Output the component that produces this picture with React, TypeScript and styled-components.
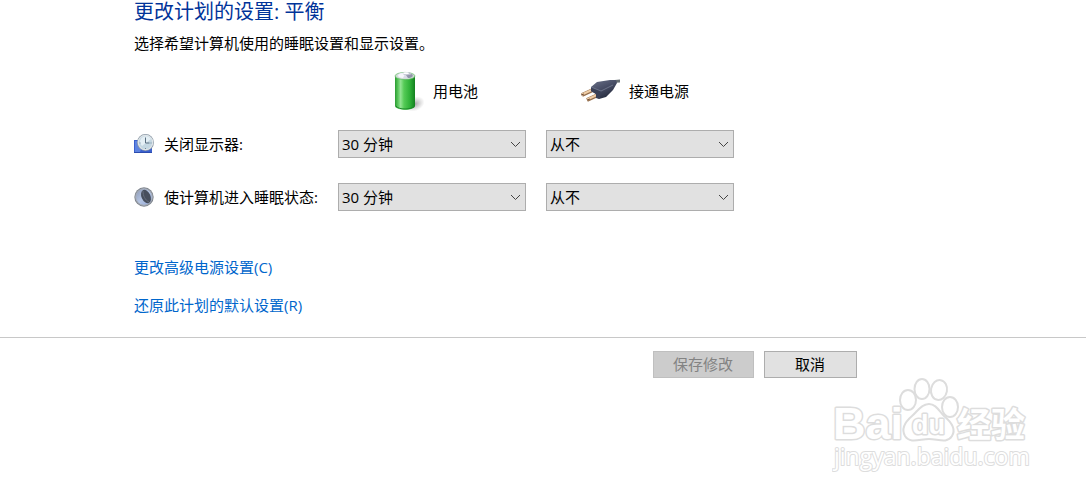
import React from 'react';
import styled, { createGlobalStyle } from 'styled-components';

const GlobalStyle = createGlobalStyle`
  * { box-sizing: border-box; }
  body {
    margin: 0;
    background: #fff;
    color: #000;
    font: 15px/20px "Open Sans", "Noto Sans CJK SC", sans-serif;
  }
  button, select { font: inherit; }
`;

const Content = styled.main`
  padding: 0 20px 22px 134px;
`;

const Title = styled.h1`
  margin: 0;
  color: #003399;
  font-size: 20px;
  font-weight: 400;
  line-height: 24px;
`;

const Intro = styled.p`
  margin: 9px 0 18px;
`;

const Settings = styled.form`
  display: grid;
  grid-template-columns: 184px 188px 188px;
  column-gap: 20px;
  row-gap: 25px;
  align-items: center;
`;

const SourceHeading = styled.div<{ $inset: number }>`
  display: flex;
  align-items: center;
  gap: 8px;
  height: 40px;
  margin-bottom: -6px;
  padding-left: ${(p) => p.$inset}px;
`;

const SettingLabel = styled.div`
  display: flex;
  align-items: center;
  gap: 10px;
  white-space: nowrap;
`;

const SelectBox = styled.div`
  position: relative;
`;

const Select = styled.select`
  display: block;
  appearance: none;
  width: 100%;
  height: 28px;
  padding: 0 24px 0 3px;
  border: 1px solid #adadad;
  border-radius: 0;
  background: #e1e1e1;
  color: #000;
`;

const Chevron = styled.svg`
  position: absolute;
  right: 5px;
  top: 10px;
  pointer-events: none;
`;

const Links = styled.nav`
  display: flex;
  flex-direction: column;
  align-items: flex-start;
  gap: 18px;
  margin-top: 46px;
`;

const Link = styled.a`
  color: #0066cc;
  text-decoration: none;
`;

const Actions = styled.div`
  display: flex;
  justify-content: flex-end;
  gap: 10px;
  padding: 13px 229px 0 20px;
  border-top: 1px solid #c8c8c8;
`;

const Button = styled.button<{ $wide?: boolean }>`
  width: ${(p) => (p.$wide ? 101 : 93)}px;
  height: 27px;
  padding: 0 1px 2px 0;
  border: 1px solid #adadad;
  background: #e1e1e1;
  color: #000;
  &:disabled {
    border-color: #bfbfbf;
    background: #cccccc;
    color: #838383;
  }
`;

const Watermark = styled.footer`
  display: flex;
  justify-content: flex-end;
  padding-right: 54px;
  svg { display: block; }
`;

const BatteryIcon = () => (
  <svg width="32" height="40" viewBox="0 0 32 40" aria-hidden="true">
    <defs>
      <linearGradient id="cell">
        <stop offset="0" stopColor="#2b9a33" />
        <stop offset=".12" stopColor="#4fbf52" />
        <stop offset=".28" stopColor="#93e493" />
        <stop offset=".45" stopColor="#55cb56" />
        <stop offset=".75" stopColor="#2eb037" />
        <stop offset="1" stopColor="#13801f" />
      </linearGradient>
      <radialGradient id="cellShade">
        <stop offset="0" stopColor="#777" stopOpacity=".65" />
        <stop offset="1" stopColor="#999" stopOpacity="0" />
      </radialGradient>
    </defs>
    <ellipse cx="22" cy="33" rx="10" ry="7" fill="url(#cellShade)" transform="rotate(-24 22 33)" />
    <path d="M2 5v30c1 5 19 5 20 0V5z" fill="url(#cell)" />
    <path d="M3 35c2 4 16 4 18 0" fill="none" stroke="#1b8a28" />
    <ellipse cx="12" cy="5" rx="10" ry="3.600" fill="#c9dccb" stroke="#57b35c" strokeWidth=".6" />
    <ellipse cx="12" cy="4.600" rx="8" ry="3" fill="#d9dbe6" />
    <path d="M5 4c2-2 5-2 7-1l-2 4C7 7 5 6 5 4z" fill="#f6f6fb" />
    <path d="M13 4l6-1c2 2 0 4-4 4z" fill="#9295aa" />
    <ellipse cx="14" cy="2.600" rx="4" ry="1.600" fill="#bfc1d0" />
    <ellipse cx="13" cy="2.200" rx="3" ry="1" fill="#fff" />
  </svg>
);

const PlugIcon = () => (
  <svg width="40" height="28" viewBox="0 0 40 28" aria-hidden="true">
    <defs>
      <linearGradient id="plug" x2=".6" y2="1">
        <stop offset="0" stopColor="#6a7188" />
        <stop offset=".5" stopColor="#484e66" />
        <stop offset="1" stopColor="#23283a" />
      </linearGradient>
    </defs>
    <path d="M29 7c4-3 6-3 10-3" fill="none" stroke="#666e72" strokeWidth="3" />
    <path d="M1 18l13-6M6 23l13-6" stroke="#96704f" strokeWidth="4" />
    <path d="M1 17.500l13-6M6 22.500l13-6" stroke="#efcda6" strokeWidth="2" />
    <path d="M10 10l6-5 13-2 6 0 1 3-4 7-7 7-7 2-3-1 0-4-5-3z" fill="url(#plug)" />
    <path d="M10 10l10 4-1 7-4 0 0-4-5-3z" fill="#3b4157" />
    <path d="M10 10l10 4 12-6" fill="none" stroke="#7d8499" strokeWidth=".7" />
    <path d="M0 18l3-1M6 23l3-1" stroke="#74523a" />
  </svg>
);

const DisplayIcon = () => (
  <svg width="20" height="20" viewBox="0 0 20 20" aria-hidden="true">
    <path d="M0 6h18v13H0z" fill="#3b60cc" />
    <path d="M1 7h9L6 18H1z" fill="#5d83e0" />
    <path d="M0 18.500h18" stroke="#2c4cae" />
    <circle cx="11.500" cy="8.500" r="8.500" fill="#8f9ca8" />
    <circle cx="11.500" cy="8.500" r="7.200" fill="#c4d7e2" stroke="#dfe5e9" strokeWidth="1.200" />
    <path d="M6 8a6 6 0 0 1 11-3L8 12c-1-1-2-3-2-4z" fill="#e4eff5" />
    <path d="M11.500 3.500v5.500h4" fill="none" stroke="#5b6f80" />
    <path d="M11.500 14v1M5.500 9h1M16.500 9h1" stroke="#71889a" />
  </svg>
);

const SleepIcon = () => (
  <svg width="20" height="20" viewBox="0 0 20 20" aria-hidden="true">
    <defs>
      <linearGradient id="moon" x2="1" y2="1">
        <stop offset="0" stopColor="#8c98b4" />
        <stop offset=".5" stopColor="#b4c4e2" />
        <stop offset="1" stopColor="#90a6d6" />
      </linearGradient>
    </defs>
    <circle cx="10" cy="10" r="9.700" fill="#7f858e" />
    <circle cx="10" cy="10" r="8.300" fill="url(#moon)" stroke="#a9afb9" />
    <ellipse cx="12" cy="9.500" rx="4.500" ry="7" fill="#474e5c" transform="rotate(-24 12 9.500)" />
    <path d="M9 4c0 5 2 9 6 11" fill="none" stroke="#666e7d" />
  </svg>
);

const WatermarkLogo = () => (
  <svg width="200" height="100" viewBox="0 0 200 100" aria-label="Baidu 经验">
    <g fill="#fff" stroke="#dddddd" strokeWidth="2" strokeLinejoin="round">
      <g fontFamily="Liberation Sans, Noto Sans CJK SC, sans-serif" fontWeight="700" paintOrder="stroke">
        <text x="1" y="61" fontSize="45" strokeWidth="3">Bai</text>
        <text x="125" y="59" fontSize="34" fontFamily="Noto Sans CJK SC, sans-serif" strokeWidth="3">经验</text>
      </g>
      <ellipse cx="76" cy="22" rx="8" ry="10" />
      <ellipse cx="90" cy="11" rx="7.500" ry="10" />
      <ellipse cx="107" cy="12" rx="8" ry="10" transform="rotate(10 107 12)" />
      <ellipse cx="118" cy="29" rx="8" ry="10" />
      <path d="M97 26c-8 0-12 8-17 12-7 6-11 13-7 20 5 8 15 3 24 3s18 5 23-3c5-8-2-15-8-20-5-5-8-12-15-12z" />
      <text x="80" y="56" fontSize="27" fontFamily="Liberation Sans, sans-serif" fontWeight="700" strokeWidth="3" paintOrder="stroke">du</text>
      <text x="2" y="87" fontSize="23" fontFamily="Open Sans, sans-serif" fontWeight="400" strokeWidth="2" paintOrder="stroke">jingyan.baidu.com</text>
    </g>
  </svg>
);

const TimeSelect = ({ label, value }: { label: string; value: string }) => (
  <SelectBox>
    <Select aria-label={label} defaultValue={value}>
      <option>30 分钟</option>
      <option>从不</option>
    </Select>
    <Chevron width="11" height="8" viewBox="0 0 11 8" aria-hidden="true">
      <path d="M1 2l4.500 4.500L10 2" fill="none" stroke="#444" />
    </Chevron>
  </SelectBox>
);

const rows = [
  { label: '关闭显示器', icon: <DisplayIcon /> },
  { label: '使计算机进入睡眠状态', icon: <SleepIcon /> },
];

export default function App() {
  return (
    <>
      <GlobalStyle />
      <Content>
        <Title>更改计划的设置: 平衡</Title>
        <Intro>选择希望计算机使用的睡眠设置和显示设置。</Intro>
        <Settings id="plan">
          <span />
          <SourceHeading $inset={55}><BatteryIcon />用电池</SourceHeading>
          <SourceHeading $inset={35}><PlugIcon />接通电源</SourceHeading>
          {rows.map(({ label, icon }) => (
            <React.Fragment key={label}>
              <SettingLabel>{icon}{label}:</SettingLabel>
              <TimeSelect label={`${label} 用电池`} value="30 分钟" />
              <TimeSelect label={`${label} 接通电源`} value="从不" />
            </React.Fragment>
          ))}
        </Settings>
        <Links>
          <Link href="#advanced">更改高级电源设置(C)</Link>
          <Link href="#restore">还原此计划的默认设置(R)</Link>
        </Links>
      </Content>
      <Actions>
        <Button form="plan" $wide disabled>保存修改</Button>
        <Button type="button">取消</Button>
      </Actions>
      <Watermark><WatermarkLogo /></Watermark>
    </>
  );
}
